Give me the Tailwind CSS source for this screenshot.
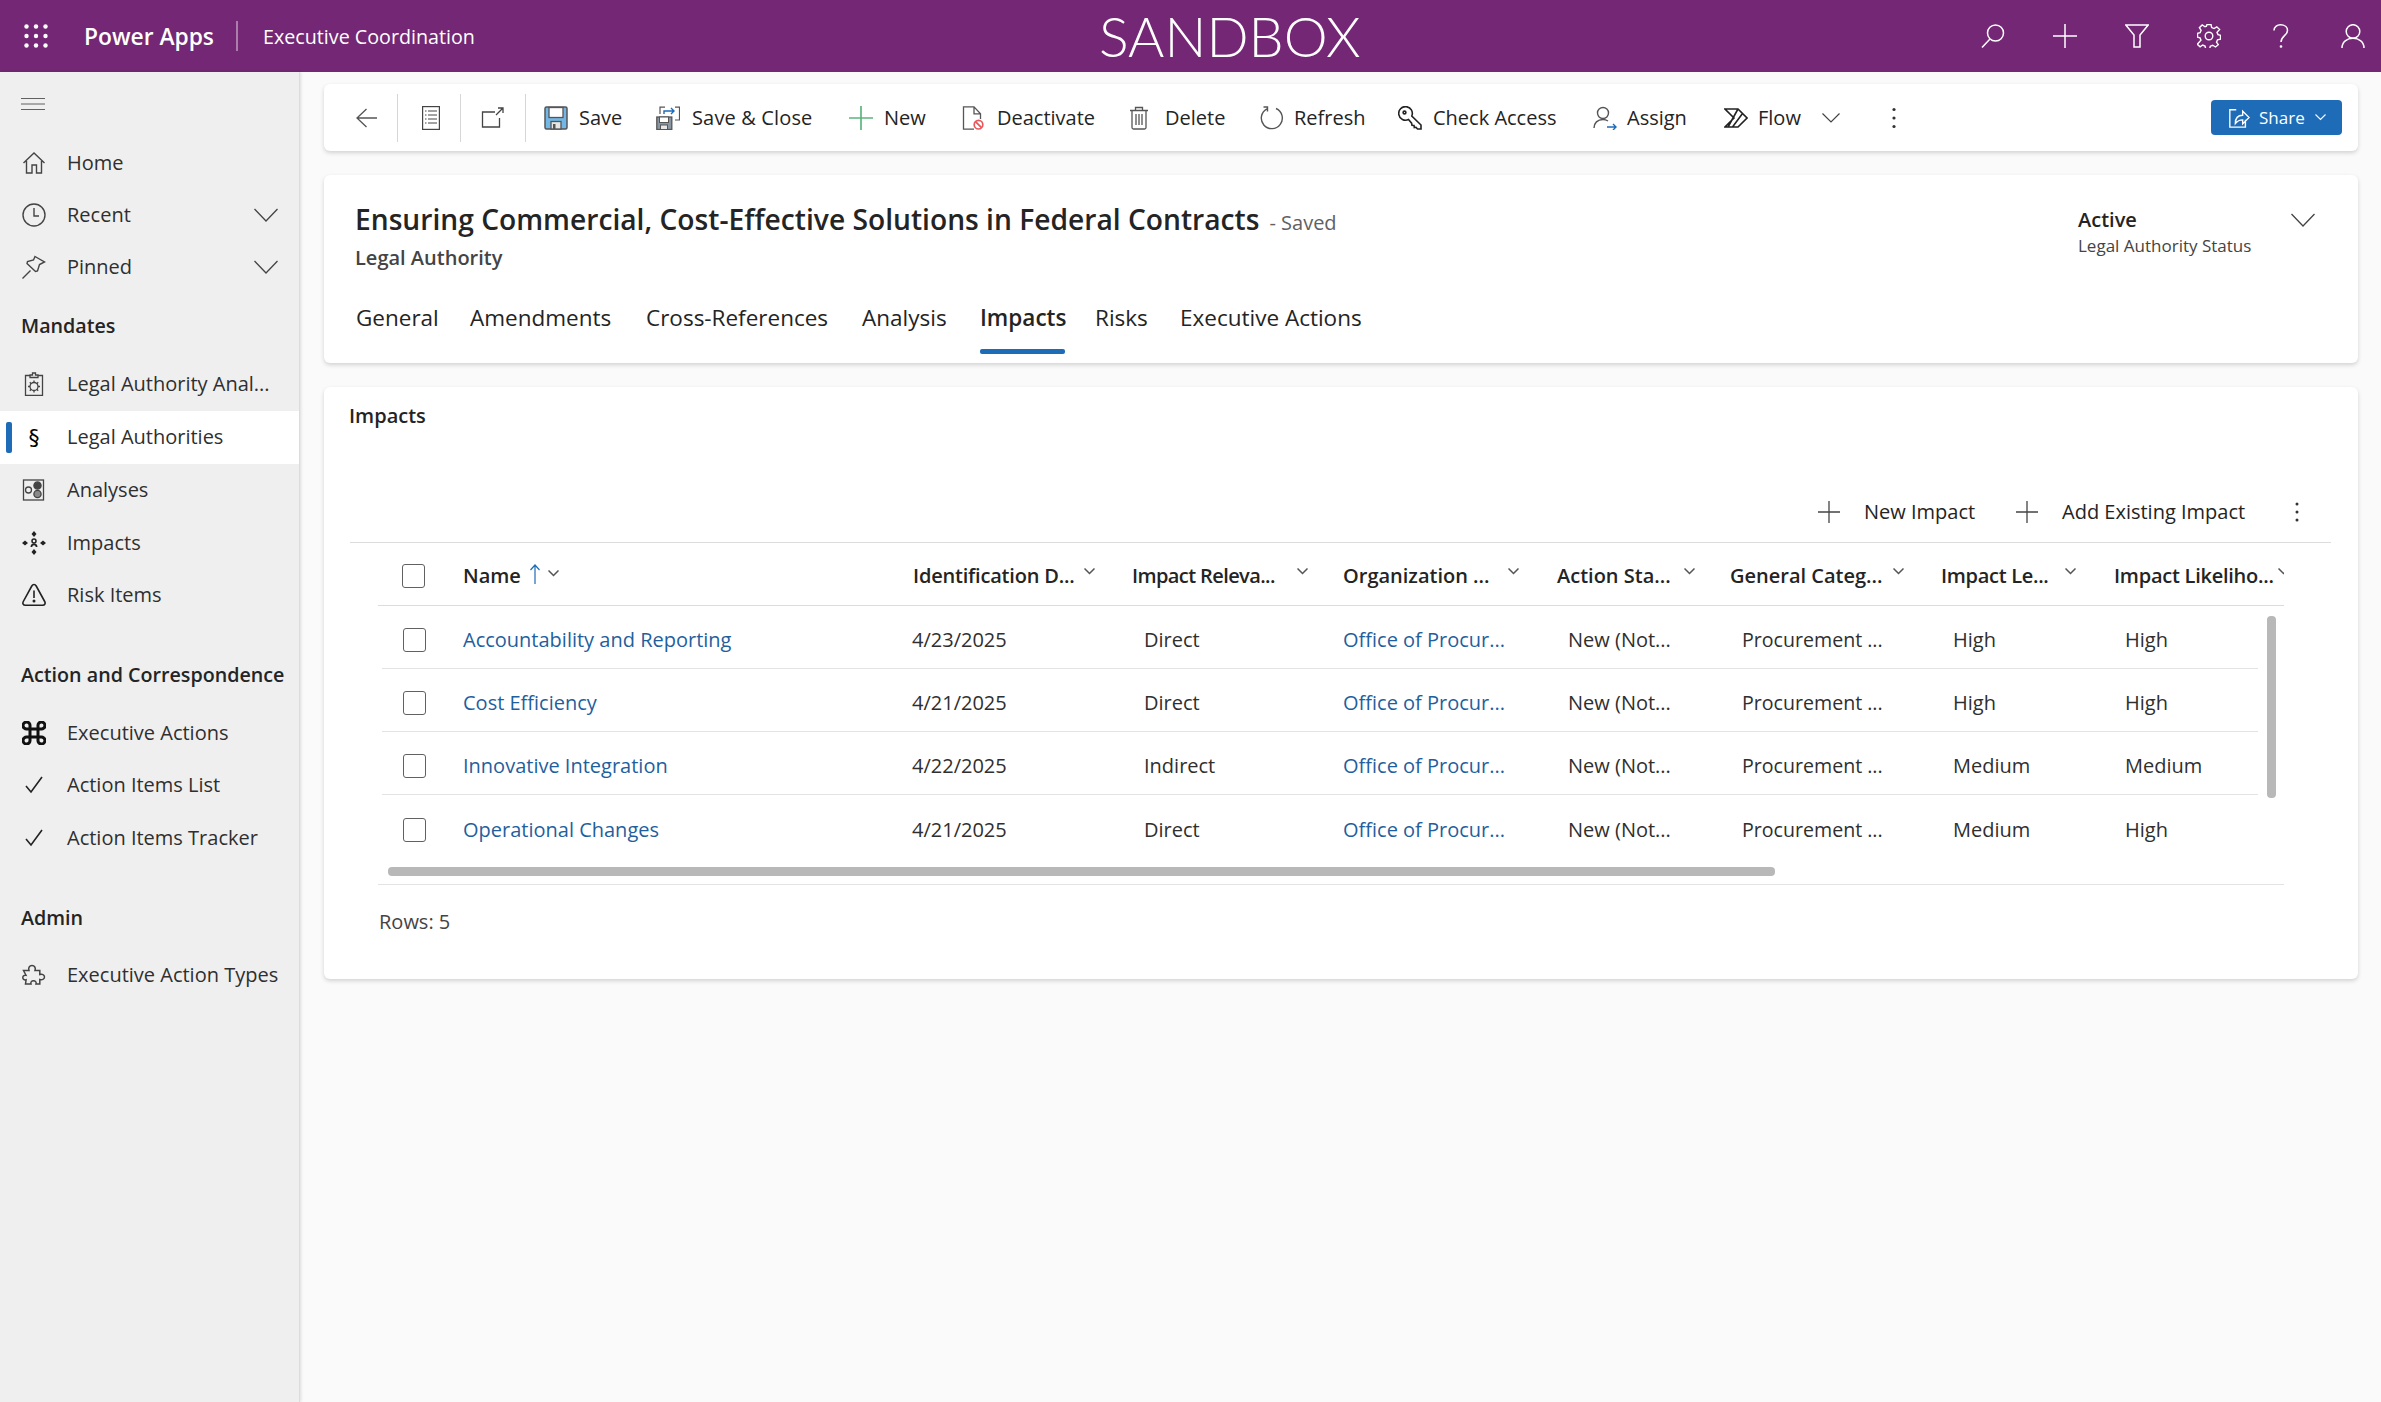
<!DOCTYPE html>
<html lang="en">
<head>
  <meta charset="UTF-8" />
  <title>Executive Coordination</title>
  <script src="https://cdn.jsdelivr.net/npm/@tailwindcss/browser@4"></script>
</head>
<body class="bg-[#fafafa] text-[#242424] font-['Open_Sans',sans-serif] text-[20px] h-[1402px] w-[2381px] overflow-hidden">

  <!-- top bar -->
  <header class="h-[72px] bg-[#742774] text-white flex items-center">
    <div class="w-[1099px] shrink-0 flex items-center">
      <svg class="ml-[24px] w-[24px] h-[24px]" viewBox="0 0 24 24" fill="#fff">
        <circle cx="2.5" cy="2.5" r="2.2"/><circle cx="12" cy="2.5" r="2.2"/><circle cx="21.5" cy="2.5" r="2.2"/>
        <circle cx="2.5" cy="12" r="2.2"/><circle cx="12" cy="12" r="2.2"/><circle cx="21.5" cy="12" r="2.2"/>
        <circle cx="2.5" cy="21.5" r="2.2"/><circle cx="12" cy="21.5" r="2.2"/><circle cx="21.5" cy="21.5" r="2.2"/>
      </svg>
      <span class="ml-[36px] mt-[2px] w-[152px] text-[22.8px] font-semibold whitespace-nowrap">Power Apps</span>
      <div class="w-[2px] h-[30px] bg-white/40"></div>
      <span class="ml-[25px] mt-[2px] text-[19.7px] whitespace-nowrap">Executive Coordination</span>
    </div>
    <span class="font-['Lato',sans-serif] font-light text-[55.5px] leading-none">SANDBOX</span>
    <div class="ml-auto flex items-center gap-[48px] pr-[16px]">
      <svg class="w-[24px] h-[24px]" viewBox="0 0 24 24" fill="none" stroke="#fff" stroke-width="1.5"><circle cx="14.5" cy="9" r="8"/><path d="M9 15 1 23.5"/></svg>
      <svg class="w-[24px] h-[24px]" viewBox="0 0 24 24" fill="none" stroke="#fff" stroke-width="1.5"><path d="M12 0v24M0 12h24"/></svg>
      <svg class="w-[24px] h-[24px]" viewBox="0 0 24 24" fill="none" stroke="#fff" stroke-width="1.5"><path d="M0.8 1h22.4L15 11v12H9V11z"/></svg>
      <svg class="w-[24px] h-[24px]" viewBox="0 0 24 24" fill="none" stroke="#fff" stroke-width="1.4"><circle cx="12" cy="12" r="3.8"/><path d="M10 1h4l.7 3.2 2.3 1 2.8-1.8 2.8 2.8L20 9l1 2.3 2.5.7v4l-3 .7-1 2.3 1.8 2.6-2.8 2.4-2.8-1.8-2.4 1-.6 2.7h-4l-.7-2.9-2.3-1-2.6 1.8-2.8-2.6L4 17l-1-2.3-2.5-.7v-4l2.6-.6 1-2.4-1.7-2.7 2.8-2.8L8 3.3l1.4-.6z" transform="translate(0 -.5) scale(1 .98)"/></svg>
      <svg class="w-[24px] h-[24px]" viewBox="0 0 24 24" fill="none" stroke="#fff" stroke-width="1.5"><path d="M5 6.5C5 3 8 .8 11.500 .8 15.500 .8 18.500 3 18.500 6.500c0 5-6.500 5.500-6.500 11.500"/><circle cx="12" cy="22.500" r=".6"/></svg>
      <svg class="w-[24px] h-[24px]" viewBox="0 0 24 24" fill="none" stroke="#fff" stroke-width="1.5"><circle cx="12" cy="7.500" r="6.800"/><path d="M1 24c0-6 5-9.700 11-9.700S23 18 23 24"/></svg>
    </div>
  </header>

  <div class="flex h-[1330px]">
    <!-- left nav -->
    <nav class="w-[300px] shrink-0 bg-[#efefef] border-r border-[#dcdcdc] shadow-[1px_0_3px_rgba(0,0,0,0.12)] text-[#2f2f2f]">
      <div class="h-[65px] pl-[21px] flex items-center">
        <svg class="w-[24px] h-[12px] mt-[-1px]" viewBox="0 0 24 12" stroke="#616161" stroke-width="1"><path d="M0 .5h24M0 6h24M0 11.500h24"/></svg>
      </div>

      <ul>
        <li class="h-[52px] flex items-center">
          <svg class="ml-[22px] w-[24px] h-[24px]" viewBox="0 0 24 24" fill="none" stroke="#444" stroke-width="1.4"><path d="M1.500 12 12 2l10.500 10M4.500 10v12h5.500v-8h4.500v8h5V10"/></svg>
          <span class="ml-[21px]">Home</span>
        </li>
        <li class="h-[52px] flex items-center">
          <svg class="ml-[22px] w-[24px] h-[24px]" viewBox="0 0 24 24" fill="none" stroke="#444" stroke-width="1.4"><circle cx="12" cy="12" r="11"/><path d="M12 5v8h5"/></svg>
          <span class="ml-[21px]">Recent</span>
          <svg class="ml-auto mr-[21px] w-[24px] h-[14px]" viewBox="0 0 24 14" fill="none" stroke="#444" stroke-width="1.300"><path d="M.5 1 12 13 23.500 1"/></svg>
        </li>
        <li class="h-[52px] flex items-center">
          <svg class="ml-[22px] w-[24px] h-[24px]" viewBox="0 0 24 24" fill="none" stroke="#444" stroke-width="1.4"><path d="m.5 23.500 8-8M13 1.500l9.500 5.500-5 2.500-2 6.500-2 .5L5 8.500l.5-2 6-1.500z"/></svg>
          <span class="ml-[21px]">Pinned</span>
          <svg class="ml-auto mr-[21px] w-[24px] h-[14px]" viewBox="0 0 24 14" fill="none" stroke="#444" stroke-width="1.300"><path d="M.5 1 12 13 23.500 1"/></svg>
        </li>
      </ul>

      <h2 class="mt-[13px] mb-[12px] h-[40px] leading-[40px] pl-[21px] text-[19.7px] font-semibold text-[#242424]">Mandates</h2>
      <ul>
        <li class="h-[52.75px] flex items-center">
          <svg class="ml-[22px] w-[24px] h-[24px]" viewBox="0 0 24 24" fill="none" stroke="#444" stroke-width="1.300"><path d="M7.500 3.500H3.500v20h17v-20h-4M8 5.500V3h2.500V1h3v2H16v2.500z"/><circle cx="12" cy="14.500" r="4"/><path d="M12 8.500v2M12 18.500v2M6 14.500h2M16 14.500h2M7.800 10.300l1.400 1.400M14.800 17.300l1.400 1.400M7.800 18.700l1.400-1.400M14.800 11.700l1.400-1.400"/></svg>
          <span class="ml-[21px] whitespace-nowrap">Legal Authority Anal...</span>
        </li>
        <li class="h-[52.75px] flex items-center bg-white relative">
          <div class="absolute left-[6px] top-[11px] w-[6px] h-[31px] rounded-[2px] bg-[#1e6bb8]"></div>
          <span class="ml-[22px] w-[24px] text-center font-['DejaVu_Sans',sans-serif] text-[22px] text-black">§</span>
          <span class="ml-[21px]">Legal Authorities</span>
        </li>
        <li class="h-[52.75px] flex items-center">
          <svg class="ml-[22px] w-[24px] h-[24px]" viewBox="0 0 24 24" fill="none" stroke="#444" stroke-width="1.300"><rect x="1.500" y="2" width="20" height="20"/><circle cx="6.500" cy="12" r="3" /><circle cx="15.500" cy="7.500" r="3.600" fill="#444"/><circle cx="15.500" cy="16" r="3.600" fill="#8a8a8a"/></svg>
          <span class="ml-[21px]">Analyses</span>
        </li>
        <li class="h-[52.75px] flex items-center">
          <svg class="ml-[22px] w-[24px] h-[24px]" viewBox="0 0 24 24" fill="#222"><path d="m12 0 2.500 3L12 6 9.500 3zM12 18l2.500 3-2.500 3-2.500-3zM0 12l3-2.500L6 12l-3 2.500zM18 12l3-2.500 3 2.500-3 2.500z"/><circle cx="12" cy="10" r="2" fill="none" stroke="#222" stroke-width="1.500"/><path d="M8.500 16c0-2.500 1.500-3.500 3.500-3.500s3.500 1 3.500 3.500h-1.800c0-1-.7-1.800-1.700-1.800s-1.700.8-1.700 1.800z"/></svg>
          <span class="ml-[21px]">Impacts</span>
        </li>
        <li class="h-[52.75px] flex items-center">
          <svg class="ml-[22px] w-[24px] h-[24px]" viewBox="0 0 24 24" fill="none" stroke="#222" stroke-width="1.600"><path d="M12 1.500c1 0 1.700.6 2.200 1.500l8.500 15.500c1 1.900.1 3.700-2 3.700H3.300c-2.100 0-3-1.800-2-3.700L9.800 3c.5-.9 1.200-1.500 2.200-1.500z"/><path d="M12 7.500v7.500"/><circle cx="12" cy="18" r=".7"/></svg>
          <span class="ml-[21px]">Risk Items</span>
        </li>
      </ul>

      <h2 class="mt-[33px] mb-[11.500px] h-[40px] leading-[40px] pl-[21px] text-[19.7px] font-semibold text-[#242424] whitespace-nowrap">Action and Correspondence</h2>
      <ul>
        <li class="h-[52.75px] flex items-center">
          <svg class="ml-[22px] w-[24px] h-[24px]" viewBox="0 0 24 24" fill="none" stroke="#111" stroke-width="3"><path d="M8 8h8v8H8zM8 8H5a3.500 3.500 0 1 1 3-3zM16 8V5a3.500 3.500 0 1 1 3 3zM16 16h3a3.500 3.500 0 1 1-3 3zM8 16v3a3.500 3.500 0 1 1-3-3z"/></svg>
          <span class="ml-[21px]">Executive Actions</span>
        </li>
        <li class="h-[52.75px] flex items-center">
          <svg class="ml-[22px] w-[24px] h-[24px]" viewBox="0 0 24 24" fill="none" stroke="#222" stroke-width="1.600"><path d="m4 13 5 6L20 4"/></svg>
          <span class="ml-[21px]">Action Items List</span>
        </li>
        <li class="h-[52.75px] flex items-center">
          <svg class="ml-[22px] w-[24px] h-[24px]" viewBox="0 0 24 24" fill="none" stroke="#222" stroke-width="1.600"><path d="m4 13 5 6L20 4"/></svg>
          <span class="ml-[21px]">Action Items Tracker</span>
        </li>
      </ul>

      <h2 class="mt-[33px] mb-[11px] h-[40px] leading-[40px] pl-[21px] text-[19.7px] font-semibold text-[#242424]">Admin</h2>
      <ul>
        <li class="h-[52.75px] flex items-center">
          <svg class="ml-[22px] w-[24px] h-[24px]" viewBox="0 0 24 24" fill="none" stroke="#444" stroke-width="1.500"><path d="M1.500 7.500H7C6 4.800 7.500 2.500 10 2.500s4 2.300 3 5h4.800v4c2.200-.8 4.700.2 4.700 2.500s-2.500 3.300-4.700 2.500v4.500H14c.6-2-.6-3.300-2.500-3.300S8.400 19 9 21H3.500l.6-4.200C2 17.300.8 16 .8 14.500S2.500 12 4 12.200z"/></svg>
          <span class="ml-[21px] whitespace-nowrap">Executive Action Types</span>
        </li>
      </ul>
    </nav>

    <main class="w-[2081px] pl-[24px] pr-[23px] pt-[12px] flex flex-col gap-[24px]">

      <!-- command bar -->
      <div class="h-[67px] pt-[1px] shrink-0 bg-white rounded-[6px] shadow-[0_2px_4px_rgba(0,0,0,0.16)] flex items-center whitespace-nowrap">
        <div class="w-[74px] h-[48px] pl-[12px] border-r border-[#d6d6d6] flex items-center justify-center">
          <svg class="w-[22px] h-[20px]" viewBox="0 0 22 20" fill="none" stroke="#555" stroke-width="1.300"><path d="M21 10H1.500M10.500 1 1 10l9.500 9"/></svg>
        </div>
        <div class="w-[63px] h-[48px] pl-[3px] border-r border-[#d6d6d6] flex items-center justify-center">
          <svg class="w-[18px] h-[24px]" viewBox="0 0 18 24" fill="none" stroke="#444" stroke-width="1.200"><rect x=".6" y=".6" width="16.800" height="22.800"/><path d="M3 5h1.500M6 5h9M3 9h1.500M6 9h9M3 13h1.500M6 13h9M3 17h1.500M6 17h9" stroke-width="1"/></svg>
        </div>
        <div class="w-[65px] h-[48px] border-r border-[#d6d6d6] flex items-center justify-center">
          <svg class="w-[24px] h-[24px]" viewBox="0 0 24 24" fill="none" stroke="#444" stroke-width="1.300"><path d="M14 6H1.500v15h17V12M15 9l7-7M17 2h5v5"/></svg>
        </div>

        <button class="w-[112px] pl-[18px] flex items-center gap-[11px]">
          <svg class="w-[24px] h-[24px]" viewBox="0 0 24 24"><rect x="1" y="1" width="22" height="22" rx="1.500" fill="#72b7e6" stroke="#555" stroke-width="1.500"/><rect x="5" y="1.500" width="14" height="10" fill="#fff" stroke="#555" stroke-width="1.300"/><rect x="7" y="15.500" width="10" height="7.500" fill="#e6e6e6" stroke="#555" stroke-width="1.300"/><rect x="9" y="18" width="2.500" height="5" fill="#555"/></svg>
          <span>Save</span>
        </button>
        <button class="w-[193px] pl-[18px] flex items-center gap-[12px]">
          <svg class="w-[24px] h-[24px]" viewBox="0 0 24 24" fill="none"><rect x=".8" y="11" width="15" height="12.500" fill="#8a97a3" stroke="#555" stroke-width="1.300"/><rect x="3.500" y="11" width="9" height="5.500" fill="#fff" stroke="#555"/><rect x="4.500" y="19" width="7" height="4.500" fill="#e6e6e6" stroke="#555"/><path d="M4 8V1.200h5M19 1.200h4.500V14H19" stroke="#555" stroke-width="1.200"/><path d="M8 8V5h10M15 2l3 3-3 3" stroke="#1e6bb8" stroke-width="1.400"/></svg>
          <span class="tracking-[0.15px]">Save &amp; Close</span>
        </button>
        <button class="w-[112px] pl-[18px] flex items-center gap-[11px]">
          <svg class="w-[24px] h-[24px]" viewBox="0 0 24 24" stroke="#5db57c" stroke-width="1.700"><path d="M12 0v24M0 12h24"/></svg>
          <span>New</span>
        </button>
        <button class="w-[166px] pl-[18px] flex items-center gap-[12px]">
          <svg class="w-[24px] h-[24px]" viewBox="0 0 24 24" fill="none"><path d="M13 23.200H2.500V.8h10.500l6.500 7V13M13 .8v7h6.500" stroke="#555" stroke-width="1.300"/><circle cx="17.500" cy="18.700" r="4.300" stroke="#e8575c" stroke-width="1.700"/><path d="m14.500 15.700 6 6" stroke="#e8575c" stroke-width="1.700"/></svg>
          <span>Deactivate</span>
        </button>
        <button class="w-[133px] pl-[18px] flex items-center gap-[14px]">
          <svg class="w-[24px] h-[24px]" viewBox="0 0 24 24" fill="none" stroke="#555" stroke-width="1.300"><path d="M3 4.500h18M8.500 4.500V1.500h7v3M5 4.500v17a1.500 1.500 0 0 0 1.500 1.500h11a1.500 1.500 0 0 0 1.500-1.500v-17M9 8v11M12 8v11M15 8v11"/></svg>
          <span>Delete</span>
        </button>
        <button class="w-[138px] pl-[18px] flex items-center gap-[10px]">
          <svg class="w-[24px] h-[24px]" viewBox="0 0 24 24" fill="none" stroke="#555" stroke-width="1.400"><path d="M16 2.500a10.500 10.500 0 1 1-9 .3M3.500 1h4v4.500"/></svg>
          <span>Refresh</span>
        </button>
        <button class="w-[195px] pl-[18px] flex items-center gap-[11px]">
          <svg class="w-[24px] h-[24px]" viewBox="0 0 24 24" fill="none" stroke="#222" stroke-width="1.600"><path d="M10.500 13.500A6.800 6.800 0 1 1 13.800 10L23 19v4h-3.500l-1.500-1.700-1.700.2-.3-2-2-.3-.4-2z"/><circle cx="6.500" cy="6.500" r="1.400"/></svg>
          <span>Check Access</span>
        </button>
        <button class="w-[131px] pl-[18px] flex items-center gap-[10px]">
          <svg class="w-[24px] h-[24px]" viewBox="0 0 24 24" fill="none" stroke="#555" stroke-width="1.400"><circle cx="10" cy="7" r="5.500"/><path d="M1 22c0-5 3.500-8.500 9-8.500 2 0 3.500.5 5 1.500"/><path d="M14 21h9M20 18l3 3-3 3" stroke="#1e6bb8"/></svg>
          <span>Assign</span>
        </button>
        <button class="w-[113px] pl-[18px] flex items-center gap-[10px]">
          <svg class="w-[24px] h-[24px]" viewBox="0 0 24 24" fill="none" stroke="#222" stroke-width="1.600"><path d="M1 3h13l9 9-9 9H1l9-9zM14 3 4 21M18.500 7.500 8.500 21"/></svg>
          <span>Flow</span>
        </button>
        <svg class="w-[18px] h-[10px] ml-[3px] mr-[3px]" viewBox="0 0 18 10" fill="none" stroke="#444" stroke-width="1.200"><path d="m.5.5 8.500 8.500L17.500.5"/></svg>
        <svg class="ml-[39px] w-[24px] h-[24px]" viewBox="0 0 24 24" fill="#333"><circle cx="12" cy="3.500" r="1.600"/><circle cx="12" cy="12" r="1.600"/><circle cx="12" cy="20.500" r="1.600"/></svg>
        <button class="ml-auto mr-[16px] mt-[-1px] w-[131px] h-[35px] bg-[#1e6bb8] rounded-[4px] text-white flex items-center pl-[17px] text-[17px]">
          <svg class="w-[22px] h-[22px]" viewBox="0 0 24 24" fill="none" stroke="#fff" stroke-width="1.500"><path d="M9 3H2v19h17v-8M8 18c0-6 3-9 8-9V4.500l7 7-7 7V14c-4 0-6 1.500-8 4z"/></svg>
          <span class="ml-[9px]">Share</span>
          <svg class="ml-[10px] w-[11px] h-[7px]" viewBox="0 0 11 7" fill="none" stroke="#fff" stroke-width="1.100"><path d="m.5.5 5 5 5-5"/></svg>
        </button>
      </div>

      <!-- record header -->
      <section class="h-[188px] shrink-0 bg-white rounded-[6px] shadow-[0_2px_4px_rgba(0,0,0,0.16)] relative pl-[31px]">
        <div class="pt-[24px] h-[42px] box-content flex items-baseline whitespace-nowrap">
          <h1 class="text-[28.2px] font-semibold leading-[40px]">Ensuring Commercial, Cost-Effective Solutions in Federal Contracts</h1>
          <span class="ml-[10px] text-[#616161]">- Saved</span>
        </div>
        <div class="mt-[2px] h-[30px] leading-[30px] font-semibold text-[#444]">Legal Authority</div>
        <div class="mt-[27px] flex text-[#242424] text-[22.5px] leading-[36px] whitespace-nowrap">
          <span class="w-[115px] pl-[1px]">General</span>
          <span class="w-[176px]">Amendments</span>
          <span class="w-[216px]">Cross-References</span>
          <span class="w-[118px]">Analysis</span>
          <span class="w-[115px] relative font-semibold">Impacts<i class="absolute left-0 top-[49px] w-[85px] h-[5px] rounded-[2px] bg-[#1e6bb8]"></i></span>
          <span class="w-[85px]">Risks</span>
          <span>Executive Actions</span>
        </div>
        <div class="absolute left-[1754px] top-[31px] whitespace-nowrap">
          <div class="font-semibold leading-[28px]">Active</div>
          <div class="text-[17px] leading-[24px] text-[#444]">Legal Authority Status</div>
        </div>
        <svg class="absolute left-[1967px] top-[38px] w-[24px] h-[14px]" viewBox="0 0 24 14" fill="none" stroke="#444" stroke-width="1.300"><path d="M.5 1 12 13 23.500 1"/></svg>
      </section>

      <!-- impacts sub grid -->
      <section class="h-[592px] shrink-0 bg-white rounded-[6px] shadow-[0_2px_4px_rgba(0,0,0,0.16)] pl-[26px] pr-[27px]">
        <h2 class="pt-[14px] h-[58px] box-content leading-[30px] ml-[-1px] font-semibold">Impacts</h2>
        <div class="h-[84px] flex items-end border-b border-[#dcdcdc] pb-[15px] whitespace-nowrap">
          <div class="ml-auto flex items-center">
            <svg class="w-[22px] h-[22px]" viewBox="0 0 22 22" stroke="#444" stroke-width="1.300"><path d="M11 0v22M0 11h22"/></svg>
            <span class="ml-[24px] w-[152px]">New Impact</span>
            <svg class="w-[22px] h-[22px]" viewBox="0 0 22 22" stroke="#444" stroke-width="1.300"><path d="M11 0v22M0 11h22"/></svg>
            <span class="ml-[24px] w-[224px]">Add Existing Impact</span>
            <svg class="w-[22px] h-[22px] mr-[23px]" viewBox="0 0 22 22" fill="#333"><circle cx="11" cy="3" r="1.500"/><circle cx="11" cy="11" r="1.500"/><circle cx="11" cy="19" r="1.500"/></svg>
          </div>
        </div>

        <div id="grid" class="ml-[28px] w-[1906px] relative">
          <div class="h-[63px] pt-[3px] border-b border-[#dcdcdc] grid grid-cols-[85px_449px_220px_211px_214px_173px_211px_173px_170px] items-center font-semibold text-[#242424] whitespace-nowrap overflow-hidden">
            <div class="pl-[24px]"><div class="w-[23px] h-[24px] border border-[#616161] rounded-[3px]"></div></div>
            <div class="flex items-center">Name
              <svg class="ml-[8px] mt-[-4px] w-[12px] h-[20px]" viewBox="0 0 12 20" fill="none" stroke="#1e6bb8" stroke-width="1.200"><path d="M6 20V1M1.500 6 6 1l4.500 5"/></svg>
              <svg class="ml-[7px] mt-[-4px] w-[11px] h-[7px]" viewBox="0 0 11 7" fill="none" stroke="#555" stroke-width="1.500"><path d="m.5.5 5 5 5-5"/></svg>
            </div>
            <div class="relative pl-[1px] tracking-[-0.2px]">Identification D...<svg class="absolute left-[172px] top-[7px] w-[11px] h-[7px]" viewBox="0 0 11 7" fill="none" stroke="#555" stroke-width="1.500"><path d="m.5.5 5 5 5-5"/></svg></div>
            <div class="relative tracking-[-0.6px]">Impact Releva...<svg class="absolute left-[165px] top-[7px] w-[11px] h-[7px]" viewBox="0 0 11 7" fill="none" stroke="#555" stroke-width="1.500"><path d="m.5.5 5 5 5-5"/></svg></div>
            <div class="relative">Organization ...<svg class="absolute left-[165px] top-[7px] w-[11px] h-[7px]" viewBox="0 0 11 7" fill="none" stroke="#555" stroke-width="1.500"><path d="m.5.5 5 5 5-5"/></svg></div>
            <div class="relative">Action Sta...<svg class="absolute left-[127px] top-[7px] w-[11px] h-[7px]" viewBox="0 0 11 7" fill="none" stroke="#555" stroke-width="1.500"><path d="m.5.5 5 5 5-5"/></svg></div>
            <div class="relative">General Categ...<svg class="absolute left-[163px] top-[7px] w-[11px] h-[7px]" viewBox="0 0 11 7" fill="none" stroke="#555" stroke-width="1.500"><path d="m.5.5 5 5 5-5"/></svg></div>
            <div class="relative tracking-[-0.3px]">Impact Le...<svg class="absolute left-[124px] top-[7px] w-[11px] h-[7px]" viewBox="0 0 11 7" fill="none" stroke="#555" stroke-width="1.500"><path d="m.5.5 5 5 5-5"/></svg></div>
            <div class="relative tracking-[-0.25px]">Impact Likeliho...<svg class="absolute left-[164px] top-[7px] w-[11px] h-[7px]" viewBox="0 0 11 7" fill="none" stroke="#555" stroke-width="1.500"><path d="m.5.5 5 5 5-5"/></svg></div>
          </div>
          <div id="rows" class="ml-[4px] mr-[26px]"></div>
          <div class="pl-[10px] pt-[9px] h-[26px]"><div class="w-[1387px] h-[9px] rounded-[4px] bg-[#b8b8b8]"></div></div>
          <div class="border-t border-[#e3e3e3]"></div>
          <div class="absolute left-[1889px] top-[73px] w-[9px] h-[182px] rounded-[4px] bg-[#b8b8b8]"></div>
          <p class="pt-[23px] pl-[1px] leading-[28px] text-[#444]">Rows: 5</p>
        </div>
      </section>
    </main>
  </div>

<script>
  const rows = [
    ['Accountability and Reporting', '4/23/2025', 'Direct', 'High', 'High'],
    ['Cost Efficiency', '4/21/2025', 'Direct', 'High', 'High'],
    ['Innovative Integration', '4/22/2025', 'Indirect', 'Medium', 'Medium'],
    ['Operational Changes', '4/21/2025', 'Direct', 'Medium', 'High']
  ];

  document.getElementById('rows').innerHTML = rows.map((r, i) => `
    <div class="h-[63px] pt-[6px] grid grid-cols-[81px_449px_220px_211px_214px_173px_211px_173px_170px] items-center whitespace-nowrap ${i < 3 ? 'border-b border-[#e3e3e3]' : ''}">
      <div class="pl-[21px]"><div class="w-[23px] h-[24px] border border-[#616161] rounded-[3px]"></div></div>
      <div class="text-[#1f5f9e]">${r[0]}</div>
      <div class="text-[#2f2f2f]">${r[1]}</div>
      <div class="pl-[12px] text-[#2f2f2f]">${r[2]}</div>
      <div class="text-[#1f5f9e]">Office of Procur...</div>
      <div class="pl-[11px] text-[#2f2f2f]">New (Not...</div>
      <div class="pl-[12px] text-[19.6px] text-[#2f2f2f]">Procurement ...</div>
      <div class="pl-[12px] text-[#2f2f2f]">${r[3]}</div>
      <div class="pl-[11px] text-[#2f2f2f]">${r[4]}</div>
    </div>`).join('');
</script>
</body>
</html>
